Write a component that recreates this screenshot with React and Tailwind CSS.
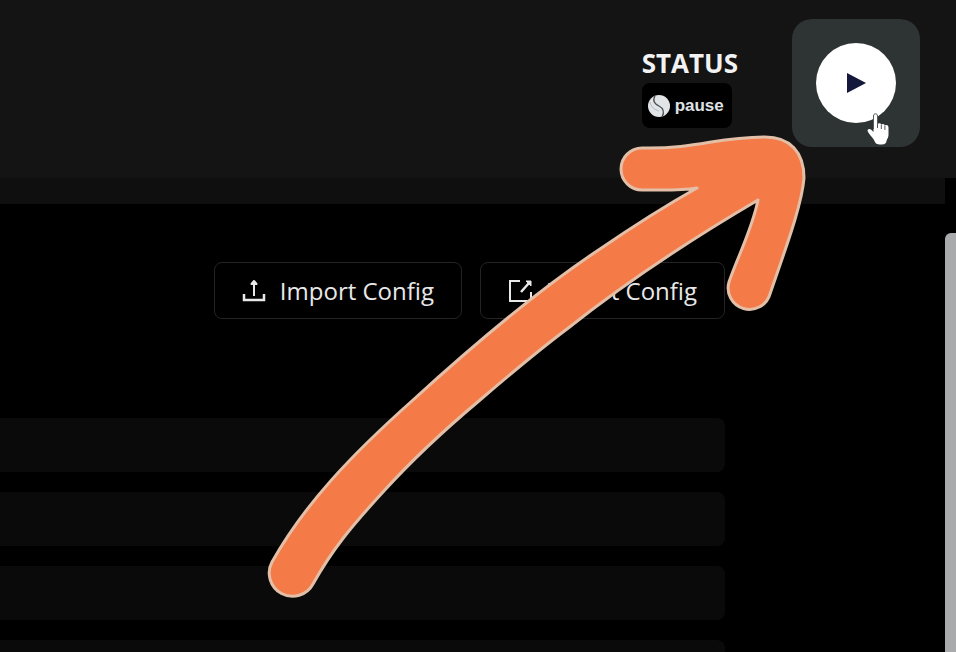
const rows = ["row-1", "row-2", "row-3", "row-4"];

function ImportIcon() {
  return (
    <svg viewBox="0 0 24 24" className="size-6 shrink-0" fill="none" stroke="currentColor" strokeWidth="2" aria-hidden="true">
      <path d="M2 15v6h20v-6" strokeWidth="2.5" />
      <path d="M12 17V4" />
      <path d="M9.5 5 12 2l2.5 3z" fill="currentColor" strokeLinejoin="round" />
    </svg>
  );
}

function ExportIcon() {
  return (
    <svg viewBox="0 0 24 24" className="size-6 shrink-0" fill="none" stroke="currentColor" strokeWidth="2" aria-hidden="true">
      <path d="M12 2H2v20h21V13" />
      <path d="M13 13 21 4" strokeWidth="2.5" />
      <path d="M18 2h5v5z" fill="currentColor" strokeWidth="1" />
    </svg>
  );
}

function PauseMark() {
  return (
    <svg viewBox="0 0 24 24" className="size-6 shrink-0" fill="none" aria-hidden="true">
      <circle cx="12" cy="12" r="11" fill="#e2e5e8" />
      <path d="M8 2C5 7 8 10 12 12S18 18 15 23" stroke="#4a4f53" strokeWidth="1.3" />
      <path d="M3 8C4 13 8 16 12 17" stroke="#b4b9bd" strokeWidth="1" />
    </svg>
  );
}

function HandCursor() {
  return (
    <svg viewBox="0 0 24 33" className="pointer-events-none absolute left-[74px] top-[94px] h-[33px] w-6" aria-hidden="true">
      <path
        d="M7.5 3c0-3 4-3 4 0v8c1-1.3 3.3-1 3.8.6 1-1.2 3-.8 3.6.8 1.4-1 3.6-.3 3.6 2V22c0 2.5-1.5 4-2 6-.4 2.8-2 3.5-5.5 3.5-4.5 0-5.5-1-6.5-3.5-1-3-4-5-6.5-9-1.5-2.5 1-4 3-2.5L7.5 19z"
        fill="#fff"
      />
      <path d="M7.5 16V3c0-3 4-3 4 0v12M15.3 11.5V16M18.9 12.5V17" fill="none" stroke="#55595a" strokeWidth="1" />
    </svg>
  );
}

function Arrow() {
  return (
    <svg viewBox="0 0 956 652" className="pointer-events-none absolute right-0 top-0 h-[652px] w-[956px]" aria-hidden="true">
      <path
        d="M272 562C304 505 350 456 413 400C470 348 535 292 600 249C635 225 665 206 697 188C680 191 660 190 642 190A21 21 0 0 1 642 148C700 149 715 137 765 137C790 137 804 152 804 178C802 205 785 250 770 294A21 21 0 0 1 729 282C737 258 752 230 758 200C695 237 625 283 567 329C535 353 508 376 480 400C443 431 412 460 383 492C350 528 332 550 313 584A22 22 0 0 1 272 562Z"
        fill="#f47a48"
        stroke="#e3bfa8"
        strokeWidth="3"
        strokeLinejoin="round"
      />
    </svg>
  );
}

function ConfigButton({ icon, children }) {
  return (
    <button
      type="button"
      className="flex h-[57px] items-center gap-3.5 whitespace-nowrap rounded-lg border border-[#242424] px-[27px] text-2xl text-[#e8e8e8]"
    >
      {icon}
      {children}
    </button>
  );
}

export default function App() {
  return (
    <div className="relative flex h-screen flex-col overflow-hidden bg-black font-['Open_Sans',sans-serif] text-white">
      <header className="flex h-[178px] shrink-0 items-start justify-end gap-[54px] bg-[#141414] pr-9 pt-[19px]">
        <div className="flex flex-col items-start pt-7">
          <p className="text-[26px] font-bold leading-8 text-[#f2f2f2]">STATUS</p>
          <div className="mt-1 flex h-[45px] items-center gap-1 rounded-lg bg-black pl-[5px] pr-2 font-['Liberation_Sans',sans-serif] text-[17px] font-bold text-[#dfe2e5]">
            <PauseMark />
            pause
          </div>
        </div>
        <div className="relative flex size-32 items-center justify-center rounded-[20px] bg-[#2e3334]">
          <button type="button" aria-label="Play" className="flex size-20 items-center justify-center rounded-full bg-white">
            <svg viewBox="0 0 20 20" className="size-5" aria-hidden="true">
              <path d="M1 0v20L20 10z" fill="#14183a" />
            </svg>
          </button>
          <HandCursor />
        </div>
      </header>

      <div className="flex min-h-0 flex-1">
        <main className="min-w-0 flex-1">
          <div className="h-[26px] bg-[#0f0f0f]" />
          <div className="pr-[220px] pt-[58px]">
            <div className="flex justify-end gap-[18px]">
              <ConfigButton icon={<ImportIcon />}>Import Config</ConfigButton>
              <ConfigButton icon={<ExportIcon />}>Export Config</ConfigButton>
            </div>
            <div className="mt-[99px] flex flex-col gap-5">
              {rows.map((row) => (
                <div key={row} className="h-[54px] rounded-r-lg bg-[#0a0a0a]" />
              ))}
            </div>
          </div>
        </main>
        <div className="w-[11px] shrink-0 pt-[55px]">
          <div className="h-full rounded-tl-md bg-[#a9aaac]" />
        </div>
      </div>

      <Arrow />
    </div>
  );
}
